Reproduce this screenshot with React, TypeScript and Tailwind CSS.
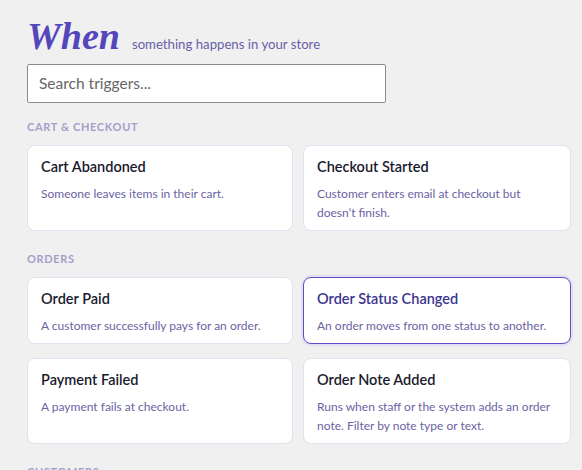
import React from "react";

type Trigger = { title: string; desc: string; selected?: boolean };

const sections: { label: string; items: Trigger[] }[] = [
  {
    label: "CART & CHECKOUT",
    items: [
      { title: "Cart Abandoned", desc: "Someone leaves items in their cart." },
      { title: "Checkout Started", desc: "Customer enters email at checkout but doesn\u2019t finish." },
    ],
  },
  {
    label: "ORDERS",
    items: [
      { title: "Order Paid", desc: "A customer successfully pays for an order." },
      { title: "Order Status Changed", desc: "An order moves from one status to another.", selected: true },
      { title: "Payment Failed", desc: "A payment fails at checkout." },
      { title: "Order Note Added", desc: "Runs when staff or the system adds an order note. Filter by note type or text." },
    ],
  },
  {
    label: "CUSTOMERS",
    items: [
      { title: "Customer Created", desc: "A new customer account is created." },
      { title: "Customer Updated", desc: "A customer changes their details." },
    ],
  },
];

function Card({ t }: { t: Trigger }) {
  return (
    <div
      className={
        t.selected
          ? "rounded-[8px] bg-white border border-[#5b4fc4] shadow-[0_0_0_2px_#e2dff3] pt-[11px] pb-[8px] px-[13px]"
          : "rounded-[8px] bg-white border border-[#e3e1ef] pt-[11px] pb-[8px] px-[13px]"
      }
    >
      <div
        className={
          t.selected
            ? "text-[14.5px] leading-[20px] font-semibold text-[#3b3590]"
            : "text-[14.5px] leading-[20px] font-semibold text-[#1a1a2e]"
        }
      >
        {t.title}
      </div>
      <div className="mt-[7px] text-[12px] leading-[19px] text-[#6b63a3]">{t.desc}</div>
    </div>
  );
}

export default function App() {
  return (
    <div
      className="bg-[#f0f0f0] pt-[16px] pl-[27px] pr-[11px] overflow-hidden h-[470px]"
      style={{ fontFamily: 'Lato, "Noto Sans", sans-serif' }}
    >
      <div className="flex items-baseline gap-[12px] h-[40px]">
        <span
          className="text-[38px] leading-[40px] font-bold italic text-[#5446bb]"
          style={{ fontFamily: '"Liberation Serif", serif' }}
        >
          When
        </span>
        <span className="text-[13.2px] text-[#6a60a8]">something happens in your store</span>
      </div>
      <div className="mt-[8px] w-[359px] h-[39px] bg-white border border-[#8c8c8c] rounded-[2px] flex items-center px-[11px]">
        <span className="text-[15.5px] text-[#666666]">Search triggers...</span>
      </div>
      {sections.map((s, i) => (
        <div key={s.label}>
          <div
            className={
              (i === 0 ? "mt-[16px]" : "mt-[20px]") +
              " text-[11px] leading-[16px] font-bold tracking-[0.06em] text-[#a39fca]"
            }
          >
            {s.label}
          </div>
          <div className="mt-[10px] grid grid-cols-[266px_1fr] gap-x-[10px] gap-y-[14px]">
            {s.items.map((t) => (
              <Card key={t.title} t={t} />
            ))}
          </div>
        </div>
      ))}
    </div>
  );
}
